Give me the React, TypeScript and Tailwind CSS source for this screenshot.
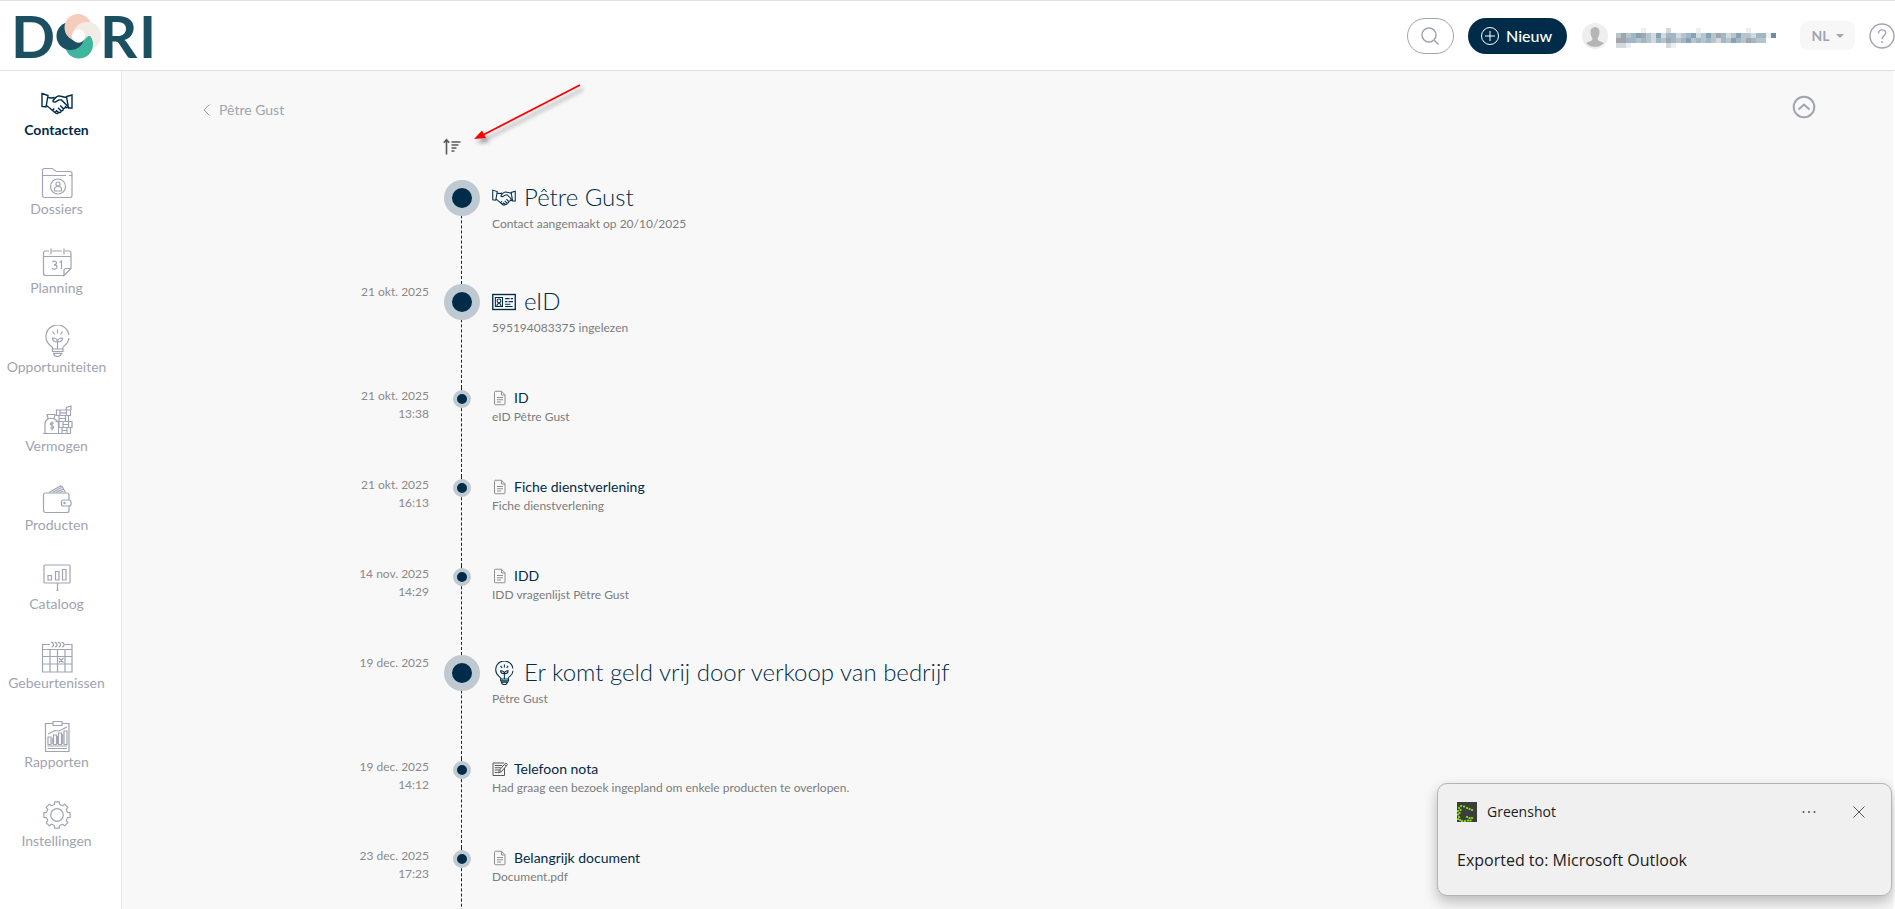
import type { ReactNode } from "react";

type IconName =
  | "handshake"
  | "folder"
  | "calendar"
  | "bulb"
  | "money"
  | "wallet"
  | "board"
  | "events"
  | "report"
  | "gear"
  | "idcard"
  | "doc"
  | "note";

const gearPoints = Array.from({ length: 8 }, (_, i) => {
  const at = (r: number, deg: number) => {
    const a = ((i * 45 + deg) * Math.PI) / 180;
    return `${(16 + r * Math.cos(a)).toFixed(2)},${(16 + r * Math.sin(a)).toFixed(2)}`;
  };
  return [at(10.8, -14), at(13.3, -10), at(13.3, 10), at(10.8, 14)].join(" ");
}).join(" ");

const shapes: Record<IconName, ReactNode> = {
  handshake: (
    <>
      <path d="M1 5.5 7 7.5 5 19 1 18.5ZM31 7 25.5 8.5 27.5 20 31 20Z" />
      <path d="M7 9.5c2.500.6 4.500.6 6.500 0M5.500 17.500 8 19.500M25.600 9.500c-3 0-5-1.800-8-1.500-2 .2-4 2.500-5.500 4.500-.8 1.200 1.500 2.200 3 1.200l2.800-1.800h2.500l6.200 6.200M27 19l-2.500.8" />
      <path d="m8 19.500 6.500 5.500c1.500 1 3 .5 2.800-.8 1.500.8 3.200 0 2.700-1.500 1.600.3 2.800-.8 2.200-2.200 1.700 0 2.800-1.300 2-2.500M11.500 22.500l1.800-2M14 24.500l2-2.300M17.200 24.200l-2-2M20 22.700l-3-3M22.200 20.500l-3-3" />
    </>
  ),
  folder: (
    <>
      <path d="M1.500 8.500V3.500C1.500 2 2.500 1.500 3.500 1.500H11c2 0 2.500 3 5 3h13c1 0 2 .8 2 2v22c0 1-.8 2-2 2H3.500c-1.200 0-2-.8-2-2ZM2 8.500h23M28 8.500h3" />
      <circle cx="17" cy="19.500" r="7.500" />
      <circle cx="17" cy="17" r="2" />
      <path d="M13.500 24v-2c0-2 1.500-2.500 3.500-2.500s3.500.5 3.500 2.500v2Z" />
    </>
  ),
  calendar: (
    <>
      <path d="M23 29.500H4.500c-1.200 0-2-.8-2-2V7c0-1.200.8-2 2-2H8M11 5h10M24 5h4c1.200 0 2 .8 2 2v15.500L23 29.500v-5c0-1.200.8-2 2-2h5M2.500 10.500H30M10 2.500v6M23 2.500v6" />
      <path d="M11.500 16c.5-1.200 4-1.500 4 .8 0 1.500-1.500 2-2.500 2 1.200 0 3 .4 3 2.300 0 2.600-4 2.600-4.800.8M18.500 16.200l2-1.200v8" />
    </>
  ),
  bulb: (
    <>
      <path d="M12 24c0-1.800-1.300-2.300-3-3.800A11.500 11.500 0 1 1 27.900 10M28 13c-.3 3-1.800 5.500-4 7.200-1.700 1.500-2.500 2-2.500 3.800" />
      <path d="M11.500 24h10.500v2.500H11.500ZM12 28.300h9.500M12.500 28.500c.5 2.300 2 3 4 3s3.500-.7 4-3M16.500 24v-9M16.500 4.500v4M11.500 6.500l2 2.800M21.500 6.500l-2 2.800M16.500 17c-4 0-5-1.500-5-4 3 0 5 1 5 4ZM16.500 17c4 0 5-1.500 5-4-3 0-5 1-5 4Z" />
    </>
  ),
  money: (
    <>
      <path d="M2 29.500h28M4 29.500V19c0-2 2-3.500 3.500-4.500h5c2 1 5 3 5 5v10M7 14.500l-1-4h8l-1 4" />
      <path d="M11 17.500v9M12.800 19.500c-1-1.500-3.500-1-3.500.5s3.500 1.500 3.500 3-2.500 2-3.700.5" />
      <path d="M15.500 6h14v5.500h-14ZM14.500 11.500h13v6h-13M18 17.500h13v6H18ZM17.500 23.500h12v6M19 6v5.500M25.500 6v5.500M18 11.500v6M24.500 11.500v6M22 17.500v6M27.500 17.500v6M21 23.500v6M26 23.500v6M25 6l.5-2.500L30 2v4" />
      <path d="M19 8.800h6.500M18 14.500h6.500M22 20.500h5.500M21 26.500h5" />
    </>
  ),
  wallet: (
    <>
      <rect x="2.500" y="10" width="25.500" height="19.500" rx="2" />
      <rect x="20.500" y="17" width="9.500" height="6" rx="2" fill="#ffffff" />
      <circle cx="23.500" cy="20" r=".6" />
      <path d="M8 9.500 19.500 3l1.500.5 3.500 6M11.500 9.500l9-5M15 9.500l7-3.500M18.500 9.500l4-1.500" />
    </>
  ),
  board: (
    <>
      <rect x="3" y="3" width="26" height="18" rx="1" />
      <path d="M16.500 21v7M15.500 28.500h2M7 13.500h3.500v4.500H7ZM14.500 9.500H18V18h-3.500ZM21.500 7.500H25V18h-3.500Z" />
    </>
  ),
  events: (
    <>
      <path d="M9 3.500H1.500V31h29.500V3.500h-7.500M1.500 8.500H31M1.500 15.500H31M1.500 23H31M9 8.500V31M16.500 8.500V31M24 8.500V31" />
      <path d="m18 17 4.500 4.500M22.500 17 18 21.500M10 1.500c3-.5 3.500 4 .5 4.500M13.500 1.500c3-.5 3.500 4 .5 4.500M17 1.500c3-.5 3.500 4 .5 4.500M20.500 1.500c3-.5 3.500 4 .5 4.500" />
    </>
  ),
  report: (
    <>
      <path d="M12 3.500H4.500v28h23.500v-28h-7M12 1.500h9v4h-9Z" />
      <path d="M7 24.500V17h3v7.500ZM12.500 24.500V15h3v9.500ZM17.500 24.500V13h3v11.500ZM23 24.500V11h3v13.500ZM7 14l7-3.500 4 .5 8-4M6.500 26h19.500M6.500 28.500h19.500" />
      <path d="M11.200 18v6M16.500 16v8M21.700 14v10" />
    </>
  ),
  gear: (
    <>
      <polygon points={gearPoints} strokeLinejoin="round" />
      <circle cx="16" cy="16" r="6.300" />
    </>
  ),
  idcard: (
    <>
      <rect x="1" y="6" width="30" height="20" strokeWidth="1.800" />
      <path d="M4.500 10H14v12H4.500ZM6.500 22c0-3 1-4 3-4s2.500 1 2.500 4M17.500 11.500h6M25 11.500h3M17.500 15.500h3M22 15.500h6M17.500 19h7M17.500 22h10" />
      <circle cx="9.300" cy="14.500" r="2.500" />
    </>
  ),
  doc: (
    <>
      <path d="M7 2.500h12l7 7V28c0 1-.6 1.500-1.500 1.500h-17C6 29.500 5 29 5 28V4.500c0-1.200.8-2 2-2ZM19 2.500V10h7" />
      <path d="M10 15h12M10 19.500h12M10 24h8" />
    </>
  ),
  note: (
    <>
      <path d="M25 14v15H2V4h22" />
      <path d="M5.500 9h15M5.500 13.500h12M5.500 18h9M5.500 23h6M13 24l2-6L27.500 4l3.500 3-12.500 14.500ZM15 18l4 3.500M25 7l3.500 3" />
    </>
  ),
};

function Icon({
  name,
  className,
  weight = 1.2,
}: {
  name: IconName;
  className?: string;
  weight?: number;
}) {
  return (
    <svg
      viewBox="0 0 32 32"
      fill="none"
      stroke="currentColor"
      strokeWidth={weight}
      className={className}
      aria-hidden="true"
    >
      {shapes[name]}
    </svg>
  );
}

const navItems: { label: string; icon: IconName }[] = [
  { label: "Contacten", icon: "handshake" },
  { label: "Dossiers", icon: "folder" },
  { label: "Planning", icon: "calendar" },
  { label: "Opportuniteiten", icon: "bulb" },
  { label: "Vermogen", icon: "money" },
  { label: "Producten", icon: "wallet" },
  { label: "Cataloog", icon: "board" },
  { label: "Gebeurtenissen", icon: "events" },
  { label: "Rapporten", icon: "report" },
  { label: "Instellingen", icon: "gear" },
];

interface TimelineEntry {
  title: string;
  text: string;
  icon: IconName;
  date?: string;
  time?: string;
  large?: boolean;
}

const entries: TimelineEntry[] = [
  { title: "Pêtre Gust", text: "Contact aangemaakt op 20/10/2025", icon: "handshake", large: true },
  { title: "eID", text: "595194083375 ingelezen", icon: "idcard", date: "21 okt. 2025", large: true },
  { title: "ID", text: "eID Pêtre Gust", icon: "doc", date: "21 okt. 2025", time: "13:38" },
  { title: "Fiche dienstverlening", text: "Fiche dienstverlening", icon: "doc", date: "21 okt. 2025", time: "16:13" },
  { title: "IDD", text: "IDD vragenlijst Pêtre Gust", icon: "doc", date: "14 nov. 2025", time: "14:29" },
  { title: "Er komt geld vrij door verkoop van bedrijf", text: "Pêtre Gust", icon: "bulb", date: "19 dec. 2025", large: true },
  { title: "Telefoon nota", text: "Had graag een bezoek ingepland om enkele producten te overlopen.", icon: "note", date: "19 dec. 2025", time: "14:12" },
  { title: "Belangrijk document", text: "Document.pdf", icon: "doc", date: "23 dec. 2025", time: "17:23" },
];

function Logo() {
  return (
    <a href="#" aria-label="DORI" className="flex items-center">
      <svg width="150" height="71" viewBox="0 0 150 71" aria-hidden="true">
        <g fill="#1a5061" fontFamily="Lato, sans-serif" fontSize="58" fontWeight="700">
          <text x="-1" y="58">D</text>
          <text x="88" y="58">R</text>
          <text x="127" y="58">I</text>
        </g>
        {/* Four discs, each one lying over the next */}
        <clipPath id="logo-top">
          <path d="M60 0h40v36H60Z" />
        </clipPath>
        <circle cx="75" cy="36" r="14" fill="#f1ece6" />
        <circle cx="67" cy="44.500" r="14" fill="#3fb59e" />
        <circle cx="58.500" cy="36" r="14" fill="#1a5061" />
        <circle cx="66" cy="27.500" r="13.500" fill="#f6cdbd" />
        <circle cx="75" cy="36" r="14" fill="#f1ece6" clipPath="url(#logo-top)" />
        <circle cx="66.500" cy="36" r="6.800" fill="#ffffff" />
      </svg>
    </a>
  );
}

// The user's name is hidden behind a mosaic, one string per row of blocks.
const mosaicShades: Record<string, string> = {
  a: "#ebf0f3",
  b: "#d3dadf",
  c: "#b6c4cd",
  d: "#a3b6c4",
  e: "#86a2b7",
  g: "#a1a5ac",
  h: "#6f8ba0",
};

const mosaicRows = [
  "     a    b     a         a",
  "cgcdegcbebddbcdebcecgdbceccbddaahf",
  "ggddcdcbdcgdcdecdcdcbdcedcgdcc",
  "bba       ba",
];

function MaskedName() {
  return (
    <svg width="165" height="24" viewBox="0 -4 165 24" className="ml-2" role="img" aria-label="Gebruiker">
      {mosaicRows.map((row, y) =>
        row.split("").map((cell, x) =>
          mosaicShades[cell] ? (
            <rect key={`${x}-${y}`} x={x * 5 - (x > 30 ? 5 : 0)} y={y * 5} width="5" height="5" fill={mosaicShades[cell]} />
          ) : null,
        ),
      )}
    </svg>
  );
}

function Header() {
  return (
    <header className="flex h-[71px] shrink-0 items-center justify-between border-y border-[#e0e0e0] bg-white pl-3">
      <Logo />
      <div className="flex items-center">
        <button
          aria-label="Zoeken"
          className="flex h-9 w-[47px] items-center justify-center rounded-full border border-[#a0a4b2] pr-0.5 text-[#a0a4b2]"
        >
          <svg width="20" height="20" viewBox="0 0 20 20" fill="none" stroke="currentColor" strokeWidth="1.500">
            <circle cx="9" cy="9" r="7" />
            <path d="m14 14 4.500 4.500" />
          </svg>
        </button>
        <button className="ml-3.5 flex h-9 w-[99px] items-center gap-[7px] rounded-full bg-[#002b49] pl-[13px] font-medium text-white">
          <svg width="18" height="18" viewBox="0 0 18 18" fill="none" stroke="currentColor">
            <circle cx="9" cy="9" r="8.500" />
            <path d="M9 4v10M4 9h10" />
          </svg>
          Nieuw
        </button>
        <svg width="26" height="26" viewBox="0 0 26 26" className="ml-[15px]" aria-hidden="true">
          <circle cx="13" cy="13" r="13" fill="#eeeeee" />
          <path
            d="M13 4c3 0 4.500 2.200 4.500 5 0 2.500-1 5-2 6.500 0 2 1 2.500 3 3 1.700.5 2.700 1 3.200 2A13 13 0 0 1 4.300 20.500c.5-1 1.500-1.500 3.200-2 2-.5 3-1 3-3-1-1.500-2-4-2-6.500 0-2.800 1.500-5 4.500-5Z"
            fill="#b5b5b5"
          />
        </svg>
        <MaskedName />
        <button className="ml-[19px] flex h-[29px] w-[55px] items-center justify-center gap-1.5 rounded-lg bg-[#f7f7f7] text-sm font-bold text-[#a0a4b2]">
          NL
          <svg width="8" height="4" viewBox="0 0 8 4" fill="currentColor">
            <path d="M0 0h8L4 4Z" />
          </svg>
        </button>
        <button aria-label="Help" className="ml-3.5 text-[#a0a4b2]">
          <svg width="26" height="26" viewBox="0 0 26 26" fill="none" stroke="currentColor" strokeWidth="1.400">
            <circle cx="13" cy="13" r="12" />
            <path d="M9.500 10.500c0-5 7.200-4.500 7.200-.5 0 2.500-3.600 2.700-3.600 6M13.100 18v2" />
          </svg>
        </button>
      </div>
    </header>
  );
}

function Sidebar() {
  return (
    <nav className="w-[122px] shrink-0 border-r border-[#e5e5e5] bg-white pt-[17px] pr-2">
      <ul className="flex flex-col gap-[27px]">
        {navItems.map((item, i) => (
          <li key={item.label}>
            <a
              href="#"
              className={
                i === 0
                  ? "flex flex-col items-center text-sm font-bold text-[#002b49]"
                  : "flex flex-col items-center text-sm text-[#a0a4b2]"
              }
            >
              <Icon name={item.icon} className="size-8" weight={i === 0 ? 1.4 : 1.2} />
              {item.label}
            </a>
          </li>
        ))}
      </ul>
    </nav>
  );
}

function TimelineRow({ entry }: { entry: TimelineEntry }) {
  return (
    <li className={entry.large ? "flex h-[104px]" : "flex h-[89px]"}>
      <div className="-mt-px w-[86px] shrink-0 text-right text-xs leading-[18px] text-[#8a8a8a]">
        <p>{entry.date}</p>
        <p>{entry.time}</p>
      </div>

      <div className="relative ml-[15px] flex w-9 shrink-0 justify-center">
        <span className="-ml-px border-l border-dashed border-[#002b49]" />
        {entry.large ? (
          <span className="absolute top-0 left-0 size-9 rounded-full border-8 border-[#bfc9d1] bg-[#002b49]" />
        ) : (
          <span className="absolute top-0.5 left-[9px] size-[18px] rounded-full border-4 border-[#bfc9d1] bg-[#002b49]" />
        )}
      </div>

      {entry.large ? (
        <div className="-mt-px ml-3 text-xs leading-[18px] text-[#7c7c7c]">
          <h2 className="flex items-center gap-2 text-2xl leading-9 font-light text-[#002b49]">
            <Icon name={entry.icon} className="mt-0.5 size-6" weight={1.4} />
            {entry.title}
          </h2>
          <p>{entry.text}</p>
        </div>
      ) : (
        <div className="ml-3 text-xs leading-[18px] text-[#7c7c7c]">
          <h3 className="flex items-center gap-1.5 text-sm text-[#002b49]">
            <Icon
              name={entry.icon}
              className={entry.icon === "note" ? "size-4 text-[#55585c]" : "size-4 text-[#8f8f8f]"}
              weight={2}
            />
            {entry.title}
          </h3>
          <p>{entry.text}</p>
        </div>
      )}
    </li>
  );
}

function Toast() {
  return (
    <div
      role="status"
      className="absolute right-[3px] bottom-[13px] flex h-[113px] w-[455px] flex-col rounded-[10px] border border-[#b4b4b4] bg-[#f0f0f0] px-[19px] pt-[18px] font-['Open_Sans',sans-serif] text-[#1c1c1c] shadow-[0_6px_14px_rgba(0,0,0,0.25)]"
    >
      <div className="flex h-5 items-center">
        <svg width="20" height="20" viewBox="0 0 20 20" aria-hidden="true">
          <path fill="#3d3d3d" d="M0 0h20v20H0Z" />
          <path
            d="M4 4h.1M7 4.500h.1M10 6h.1M12.500 7h.1M15 8h.1M2 6h.1M3.500 8h.1M1 9h.1M2.500 11h.1M1 12.500h.1M2 15h.1M1 17h.1M3 18h.1M5 19h.1M8 19h.1M10 15h.1M12.500 16h.1M15 16h.1M11 18.500h.1M13.500 18.500h.1"
            stroke="#86e80b"
            strokeWidth="2.200"
            strokeLinecap="round"
          />
        </svg>
        <span className="ml-2.5 grow text-sm">Greenshot</span>
        <button aria-label="Meer opties" className="text-[#555555]">
          <svg width="14" height="12" viewBox="0 0 14 12" fill="currentColor">
            <circle cx="1.500" cy="6" r="1" />
            <circle cx="7" cy="6" r="1" />
            <circle cx="12.500" cy="6" r="1" />
          </svg>
        </button>
        <button aria-label="Sluiten" className="mr-[7px] ml-[37px] text-[#555555]">
          <svg width="12" height="12" viewBox="0 0 12 12" stroke="currentColor">
            <path d="M.5.5l11 11M11.500.5l-11 11" />
          </svg>
        </button>
      </div>
      <p className="mt-[26px] text-base">Exported to: Microsoft Outlook</p>
    </div>
  );
}

export default function App() {
  return (
    <div className="relative flex h-screen flex-col overflow-hidden bg-white font-[Lato,sans-serif]">
      <Header />
      <div className="flex min-h-0 grow">
        <Sidebar />
        <main className="relative min-w-0 grow overflow-hidden border-r-2 border-white bg-[#f8f8f8] pt-6">
          <div className="flex items-start justify-between pr-[77px] pl-20">
            <a href="#" className="flex items-center gap-2 pt-[5px] text-sm text-[#a0a4b2]">
              <svg width="9" height="12" viewBox="0 0 9 12" fill="none" stroke="currentColor">
                <path d="M7.500.5 2 6l5.500 5.500" />
              </svg>
              Pêtre Gust
            </a>
            <button aria-label="Naar boven" className="text-[#a0a4b2]">
              <svg width="24" height="24" viewBox="0 0 24 24" fill="none" stroke="currentColor" strokeWidth="2">
                <circle cx="12" cy="12" r="10.300" />
                <path d="m6.500 14.500 5.500-5 5.500 5" />
              </svg>
            </button>
          </div>

          {/* Sort direction */}
          <button aria-label="Sorteren" className="mt-[18px] ml-[321px] block text-[#55585c]">
            <svg width="18" height="18" viewBox="0 0 18 18" fill="none" stroke="currentColor" strokeWidth="1.600">
              <path d="M3.500 16.500V2M.8 4.800l2.700-3 2.700 3M8.500 4h9M8.500 7h7M8.500 10h5M8.500 13h3" />
            </svg>
          </button>

          <ol className="mt-6 pl-[221px]">
            {entries.map((entry, i) => (
              <TimelineRow key={i} entry={entry} />
            ))}
          </ol>

          {/* Arrow that points at the sort button */}
          <svg
            width="120"
            height="66"
            viewBox="0 0 120 66"
            className="absolute top-[7px] left-[345px] drop-shadow-[3px_4px_2px_rgba(0,0,0,0.4)]"
            aria-hidden="true"
          >
            <path d="M113 7 16 57" stroke="#fe0000" strokeWidth="1.800" />
            <path d="m7 61 8-8.500 4 7.500Z" fill="#fe0000" />
          </svg>
        </main>
      </div>
      <Toast />
    </div>
  );
}
